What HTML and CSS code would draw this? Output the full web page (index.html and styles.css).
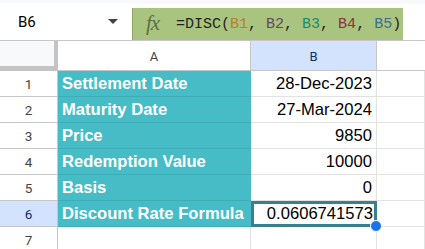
FILE: index.html
```html
<!DOCTYPE html>
<html lang="en">
<head>
    <meta charset="UTF-8">
    <title>DISC</title>
    <link rel="stylesheet" href="styles.css">
</head>
<body>
    <div class="topbar">
        <div class="namebox">
            <span class="cell-ref">B6</span>
            <span class="caret"></span>
        </div>
        <div class="formula">
            <span class="fx">fx</span>
            <span class="expr">=DISC(<span class="r1">B1</span>, <span class="r2">B2</span>, <span class="r3">B3</span>, <span class="r4">B4</span>, <span class="r5">B5</span>)</span>
        </div>
    </div>

    <div class="sheet">
        <div class="corner"><div class="corner-box"></div></div>
        <div class="col-head">A</div>
        <div class="col-head active">B</div>
        <div class="col-head blank"></div>

        <div class="row-head">1</div>
        <div class="label">Settlement Date</div>
        <div class="value">28-Dec-2023</div>
        <div class="empty"></div>

        <div class="row-head">2</div>
        <div class="label">Maturity Date</div>
        <div class="value">27-Mar-2024</div>
        <div class="empty"></div>

        <div class="row-head">3</div>
        <div class="label">Price</div>
        <div class="value">9850</div>
        <div class="empty"></div>

        <div class="row-head">4</div>
        <div class="label">Redemption Value</div>
        <div class="value">10000</div>
        <div class="empty"></div>

        <div class="row-head">5</div>
        <div class="label">Basis</div>
        <div class="value">0</div>
        <div class="empty"></div>

        <div class="row-head active">6</div>
        <div class="label">Discount Rate Formula</div>
        <div class="value selected">0.0606741573<span class="handle"></span></div>
        <div class="empty"></div>

        <div class="row-head">7</div>
        <div class="empty"></div>
        <div class="empty"></div>
        <div class="empty"></div>
    </div>
</body>
</html>
```

FILE: styles.css
```css
* {
    margin: 0;
    padding: 0;
    box-sizing: border-box;
}

body {
    width: 425px;
    height: 249px;
    overflow: hidden;
    background: white;
    font-family: 'Liberation Sans', Arial, sans-serif;
    color: #000;
}

/* barra da fórmula */
.topbar {
    height: 41px;
    display: flex;
    align-items: flex-end;
    border-bottom: 1px solid #c7c7c7;
    background: linear-gradient(#f8f9fa 0 4px, white 4px);
}

.namebox {
    width: 132px;
    height: 37px;
    display: flex;
    align-items: center;
    padding-left: 18px;
    padding-right: 14px;
    background: white;
}

.cell-ref {
    font-family: 'Roboto', sans-serif;
    font-size: 15px;
    flex: 1;
}

.caret {
    width: 0;
    height: 0;
    border-left: 5px solid transparent;
    border-right: 5px solid transparent;
    border-top: 5px solid #444;
}

.formula {
    width: 271px;
    height: 32px;
    background: #a9c47f;
    border-left: 1px solid #8da866;
    display: flex;
    align-items: center;
    padding-left: 13px;
}

.fx {
    font-family: 'Liberation Serif', serif;
    font-style: italic;
    font-size: 21px;
    color: #5e6e48;
    width: 30px;
    letter-spacing: -1px;
    margin-top: -2px;
}

.expr {
    font-family: 'Liberation Mono', 'DejaVu Sans Mono', monospace;
    font-size: 15px;
    color: #1f1f1f;
    white-space: nowrap;
}

.r1 { color: #b5812a; }
.r2 { color: #5f4a62; }
.r3 { color: #1c8a68; }
.r4 { color: #8b3041; }
.r5 { color: #3f6d8e; }

/* planilha */
.sheet {
    display: grid;
    grid-template-columns: 58px 193px 126px 1fr;
    grid-template-rows: 30px repeat(7, 26px);
    font-size: 16.6px;
}

.corner {
    background: #c4c4c4;
    padding: 0 4px 5px 0;
}

.corner-box {
    height: 100%;
    background: #f8f9fa;
}

.col-head {
    display: flex;
    align-items: center;
    justify-content: center;
    font-family: 'Roboto', sans-serif;
    font-size: 13px;
    color: #444;
    border-right: 1px solid #c7c7c7;
    border-bottom: 1px solid #c7c7c7;
    padding-top: 2px;
}

.col-head.active {
    background: #d3e3fd;
    color: #0b2e6b;
}

.col-head.blank {
    border-right: none;
}

.row-head {
    display: flex;
    align-items: center;
    justify-content: center;
    font-family: 'Roboto', sans-serif;
    font-size: 13.5px;
    color: #444;
    border-right: 1px solid #c7c7c7;
    border-bottom: 1px solid #c7c7c7;
}

.row-head.active {
    background: #d3e3fd;
    color: #0b2e6b;
}

.label {
    background: #46bdc6;
    color: white;
    font-weight: bold;
    display: flex;
    align-items: center;
    padding-left: 4px;
    border-bottom: 1px solid #3fadb6;
    white-space: nowrap;
}

.value {
    display: flex;
    align-items: center;
    justify-content: flex-end;
    padding-right: 4px;
    border-right: 1px solid #e2e2e2;
    border-bottom: 1px solid #e2e2e2;
}

.empty {
    border-right: 1px solid #e2e2e2;
    border-bottom: 1px solid #e2e2e2;
}

.selected {
    position: relative;
    border: 3px solid #3a7f8e;
    padding-right: 1px;
}

.handle {
    position: absolute;
    right: -8px;
    bottom: -8px;
    width: 12px;
    height: 12px;
    border-radius: 50%;
    background: #1a73e8;
    border: 1px solid white;
}
```
